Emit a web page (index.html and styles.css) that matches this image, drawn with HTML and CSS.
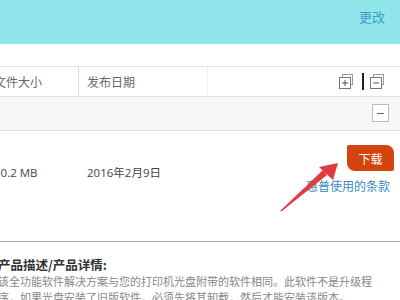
FILE: index.html
```html
<!DOCTYPE html>
<html lang="zh-CN">
<head>
<meta charset="utf-8">
<link rel="stylesheet" href="styles.css">
</head>
<body>
<div class="topbar"><a class="change">更改</a></div>
<div class="spacer"></div>
<div class="table">
  <div class="thead">
    <div class="c1">文件大小</div>
    <div class="c2">发布日期</div>
    <div class="tools">
      <svg class="ico" width="15" height="15" viewBox="0 0 15 15"><rect x="3.5" y="0.5" width="10" height="10" fill="#fff" stroke="#999"/><rect x="0.5" y="3.5" width="11" height="11" fill="#fff" stroke="#777"/><path d="M3 9h6M6 6v6" stroke="#555" stroke-width="1"/></svg>
      <span class="bar"></span>
      <svg class="ico" width="15" height="15" viewBox="0 0 15 15"><rect x="3.5" y="0.5" width="10" height="10" fill="#fff" stroke="#999"/><rect x="0.5" y="3.5" width="11" height="11" fill="#fff" stroke="#777"/><path d="M3 9h6" stroke="#555" stroke-width="1"/></svg>
    </div>
  </div>
  <div class="group">
    <svg class="gmin" width="17" height="18" viewBox="0 0 17 18"><rect x="0.5" y="0.5" width="16" height="17" fill="#fff" stroke="#bbb"/><path d="M5 9.5h7" stroke="#666"/></svg>
  </div>
  <div class="file">
    <div class="c1 val">10.2 MB</div>
    <div class="c2 val">2016年2月9日</div>
    <div class="act">
      <a class="btn">下载</a>
      <a class="terms">惠普使用的条款</a>
    </div>
    <svg class="arrow" width="400" height="110" viewBox="0 131 400 110"><polygon points="280,211 282,211 327,175 323,170" fill="#e23b3f"/><polygon points="338,163 319,167 333,180" fill="#e23b3f"/></svg>
  </div>
</div>
<div class="desc">
  <div class="dtitle">产品描述/产品详情:</div>
  <p class="dtext">该全功能软件解决方案与您的打印机光盘附带的软件相同。此软件不是升级程序，如果光盘安装了旧版软件，必须先将其卸载，然后才能安装该版本。</p>
</div>
</body>
</html>
```
FILE: styles.css
```css
* { box-sizing: border-box; }
body {
  margin: 0;
  width: 400px;
  height: 300px;
  overflow: hidden;
  background: #fff;
  font-family: "Noto Sans CJK SC", "Open Sans", sans-serif;
  font-size: 12px;
  color: #444;
}
.topbar {
  height: 44px;
  background: #8fe5e9;
  display: flex;
  justify-content: flex-end;
  align-items: flex-start;
  padding: 8px 15px 0 0;
}
.change {
  color: #3da0c3;
  font-size: 13px;
  line-height: 18px;
}
.spacer { height: 22px; }
.table {
  margin-left: -6px;
  border-top: 1px solid #e4e4e4;
}
.thead {
  height: 30px;
  display: flex;
  align-items: stretch;
  border-bottom: 1px solid #e2e2e2;
  color: #666;
}
.c1 {
  width: 85px;
  flex: none;
  display: flex;
  align-items: center;
  border-right: 1px solid #ddd;
}
.c2 {
  width: 129px;
  flex: none;
  padding-left: 8px;
  display: flex;
  align-items: center;
  border-right: 1px solid #f0f0f0;
}
.tools {
  flex: 1;
  display: flex;
  align-items: center;
  justify-content: flex-end;
  padding-right: 15px;
  gap: 6px;
}
.ico { display: block; }
.bar {
  width: 2px;
  height: 17px;
  background: #222;
  margin-left: 2px;
}
.group {
  height: 34px;
  background: #f7f7f7;
  border-bottom: 1px solid #dcdcdc;
  display: flex;
  justify-content: flex-end;
  align-items: flex-start;
  padding: 7px 11px 0 0;
}
.gmin { display: block; }
.file {
  position: relative;
  height: 111px;
  display: flex;
  border-bottom: 1px solid #a8a8a8;
}
.file .c1, .file .c2 {
  border-right: none;
  align-items: flex-start;
  padding-top: 34px;
  line-height: 16px;
  font-family: "Open Sans", "Noto Sans CJK SC", sans-serif;
  color: #444;
  font-size: 11.5px;
}
.act {
  flex: 1;
  display: flex;
  flex-direction: column;
  align-items: flex-end;
  padding: 14px 6px 0 0;
}
.btn {
  width: 47px;
  height: 26px;
  background: #d5440f;
  color: #fff;
  border-radius: 2px 8px 2px 8px;
  display: flex;
  align-items: center;
  justify-content: center;
  font-size: 12px;
}
.terms {
  margin-top: 8px;
  margin-right: 4px;
  color: #3a8cc0;
  font-size: 12px;
  line-height: 14px;
}
.arrow {
  position: absolute;
  left: 6px;
  top: 0;
}
.desc {
  margin-left: -2px;
  padding-top: 15px;
}
.dtitle {
  font-size: 12.5px;
  font-weight: bold;
  color: #333;
  line-height: 16px;
}
.dtext {
  margin: 0;
  font-size: 11px;
  line-height: 16px;
  color: #888;
  width: 380px;
}
```
